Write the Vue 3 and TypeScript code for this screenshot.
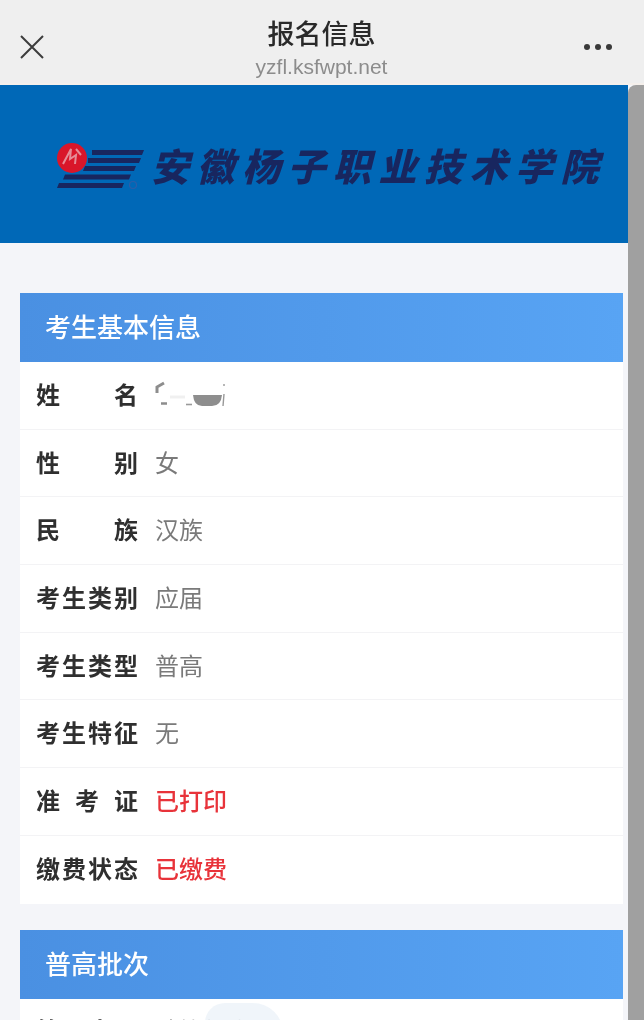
<script setup lang="ts">
interface Row {
  label: string
  value: string
  red?: boolean
  hidden?: boolean
}

const rows: Row[] = [
  { label: '姓名', value: '', hidden: true },
  { label: '性别', value: '女' },
  { label: '民族', value: '汉族' },
  { label: '考生类别', value: '应届' },
  { label: '考生类型', value: '普高' },
  { label: '考生特征', value: '无' },
  { label: '准考证', value: '已打印', red: true },
  { label: '缴费状态', value: '已缴费', red: true },
]
</script>

<template>
  <div class="app">
    <header class="nav">
      <svg class="close" width="26" height="26" viewBox="0 0 26 26">
        <path d="M2 3 L24 25 M24 3 L2 25" stroke="#3c3c3c" stroke-width="2" fill="none" />
      </svg>
      <div class="nav-title">
        <div class="title">报名信息</div>
        <div class="url">yzfl.ksfwpt.net</div>
      </div>
      <div class="more"><i></i><i></i><i></i></div>
    </header>

    <div class="body">
      <main class="content">
        <div class="banner">
          <svg class="logo" width="90" height="56" viewBox="0 0 90 56">
            <g fill="#18265f">
              <path d="M36 8 H88 L86 13 H36 Z" />
              <path d="M32 16 H85 L83 21 H32 Z" />
              <path d="M29 24 H80 L78 29 H27 Z" />
              <path d="M9 32.5 H75 L73 37.5 H7 Z" />
              <path d="M3 41 H68 L66 46 H1 Z" />
            </g>
            <circle cx="16" cy="16" r="15" fill="#d9162a" />
            <path d="M7 22 L15 7 L14 17 L20 13 L19 22 M20 7 L25 13" stroke="#e58c97" stroke-width="2" fill="none" />
            <circle cx="77" cy="43" r="3.5" fill="none" stroke="#2b5ea8" stroke-width="1.2" />
          </svg>
          <div class="school">安徽杨子职业技术学院</div>
        </div>

        <section class="panel first">
          <h2 class="panel-head">考生基本信息</h2>
          <div v-for="r in rows" :key="r.label" class="row">
            <span class="label">{{ r.label }}</span>
            <span v-if="r.hidden" class="smudge">
              <svg width="72" height="30" viewBox="0 0 72 30">
                <path d="M3 14 L3 8 L10 4" stroke="#8d8d8d" stroke-width="3" fill="none" />
                <path d="M7 24.5 H13" stroke="#8d8d8d" stroke-width="2.5" fill="none" />
                <path d="M16 18 H31" stroke="#f0f0f0" stroke-width="3" fill="none" />
                <path d="M32 25.5 H38" stroke="#9a9a9a" stroke-width="1.6" fill="none" />
                <path d="M39 16 H68 Q67 27 58 27 H48 Q40 27 39 16 Z" fill="#8e8e8e" />
                <path d="M70 5 V7 M70 15 L69 27" stroke="#999" stroke-width="1.4" fill="none" />
              </svg>
            </span>
            <span v-else class="value" :class="{ red: r.red }">{{ r.value }}</span>
          </div>
        </section>

        <section class="panel second">
          <h2 class="panel-head">普高批次</h2>
          <div class="row">
            <span class="label">第一志愿</span>
            <span class="value">计算机应用</span>
          </div>
          <div class="blot"></div>
        </section>
      </main>
      <div class="scrollbar"></div>
    </div>
  </div>
</template>

<style scoped>
.app {
  width: 644px;
  height: 1020px;
  overflow: hidden;
  font-family: "Noto Sans CJK SC", "Liberation Sans", sans-serif;
  filter: blur(0.6px);
}

.nav {
  height: 85px;
  background: #efefef;
  display: flex;
  align-items: center;
  justify-content: space-between;
  padding: 0 32px 0 19px;
  box-sizing: border-box;
  border-bottom: 2px solid #f5f0ec;
}

.close {
  margin-top: 8px;
}

.nav-title {
  text-align: center;
  margin-top: 12px;
  margin-left: 14px;
}

.title {
  font-size: 27px;
  line-height: 36px;
  font-weight: 500;
  color: #2a2a2a;
}

.url {
  margin-top: 3px;
  font-family: "Liberation Sans", sans-serif;
  font-size: 21px;
  line-height: 26px;
  color: #8c8c8c;
}

.more {
  display: flex;
  gap: 5px;
  margin-top: 10px;
}

.more i {
  width: 6px;
  height: 6px;
  border-radius: 50%;
  background: #3a3a3a;
}

.body {
  display: flex;
  height: 935px;
  background: #f4f5f9;
}

.content {
  flex: 1;
  min-width: 0;
}

.scrollbar {
  width: 16px;
  height: 100%;
  background: #a0a0a0;
  border-radius: 8px 0 0 0;
}

.banner {
  height: 158px;
  background: #0068b7;
  display: flex;
  align-items: center;
  padding-left: 56px;
  box-sizing: border-box;
}

.logo {
  flex: none;
  margin-top: 12px;
}

.school {
  margin-left: 5px;
  font-size: 38px;
  letter-spacing: 7.5px;
  font-weight: 900;
  font-style: italic;
  color: #18265f;
  white-space: nowrap;
}

.panel {
  margin: 0 5px 0 20px;
  background: #fff;
}

.panel.first {
  margin-top: 50px;
  margin-bottom: 26px;
}

.panel.second {
  position: relative;
}

.panel-head {
  margin: 0;
  height: 69px;
  padding: 0 0 4px 25px;
  box-sizing: border-box;
  display: flex;
  align-items: center;
  background: linear-gradient(90deg, #4a90e2, #58a4f4);
  color: #fff;
  font-size: 26px;
  font-weight: 500;
}

.row {
  height: 67.7px;
  display: flex;
  align-items: center;
  gap: 17px;
  padding: 0 0 4px 16px;
  border-bottom: 1px solid #f3f3f5;
  box-sizing: border-box;
}

.row:last-child {
  border-bottom: none;
}

.label {
  width: 102px;
  flex: none;
  font-size: 24px;
  font-weight: 700;
  color: #2f2f2f;
  text-align-last: justify;
}

.value {
  font-size: 24px;
  color: #7a7a7a;
}

.value.red {
  color: #e8333a;
  font-weight: 500;
}

.smudge {
  display: flex;
  margin: 2px 0 0 -1px;
}

.blot {
  position: absolute;
  left: 185px;
  top: 73px;
  width: 78px;
  height: 40px;
  border-radius: 20px 30px 0 0;
  background: #edf3f9;
  opacity: 0.85;
}
</style>

<style>
body {
  background: #f4f5f9;
}
</style>
